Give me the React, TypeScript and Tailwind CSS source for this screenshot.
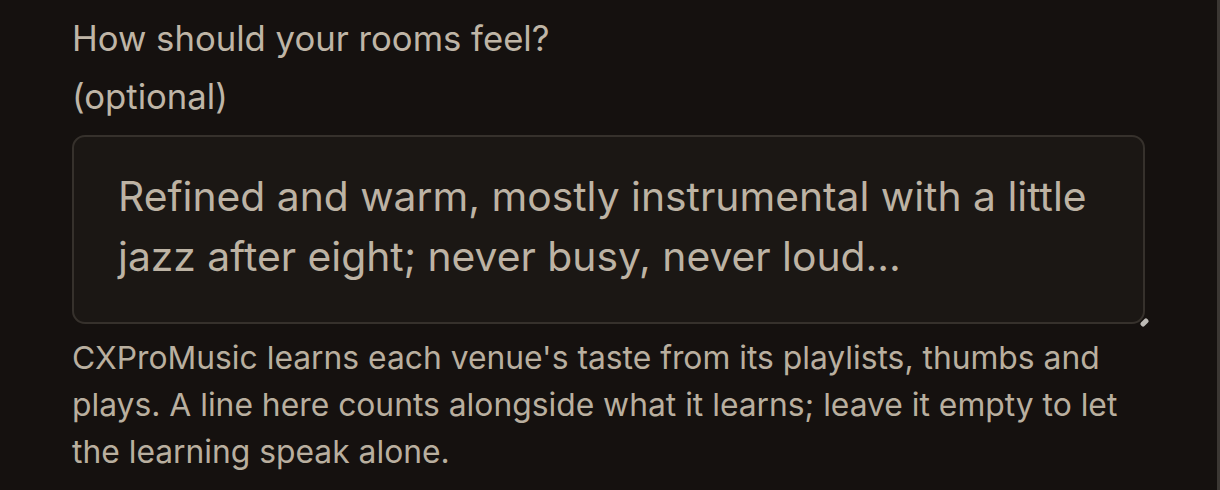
import { useState } from "react";

export default function App() {
  const [vibe, setVibe] = useState("");

  return (
    <div className="min-h-[490px] w-full bg-[#15110f] flex [font-family:Inter,'Noto_Sans',sans-serif]">
      <div className="flex-1 pl-[72px] pt-[9px]">
        <div className="w-[1073px] flex flex-col">
          <label htmlFor="vibe" className="text-[34.7px] leading-[58px] text-[#bfb5a6]">
            How should your rooms feel?
            <br />
            (optional)
          </label>

          <div className="relative mt-[10px]">
            <textarea
              id="vibe"
              value={vibe}
              onChange={(e) => setVibe(e.target.value)}
              placeholder="Refined and warm, mostly instrumental with a little jazz after eight; never busy, never loud…"
              className="block h-[189px] w-full resize-none rounded-[13px] border-2 border-[#36312c] bg-[#1b1714] px-[44px] py-[29px] text-[40.8px] leading-[60px] text-[#c6bcad] placeholder:text-[#bdb3a4] outline-none"
            />
            {/* resize grip */}
            <div className="pointer-events-none absolute right-[-4px] bottom-[-1px] h-[5px] w-[9px] -rotate-45 rounded-[2px] bg-[#bdbab6]" />
          </div>

          <p className="mt-[10px] text-[31.8px] leading-[47px] text-[#b9af9f]">
            CXProMusic learns each venue's taste from its playlists, thumbs and plays. A line here
            counts alongside what it learns; leave it empty to let the learning speak alone.
          </p>
        </div>
      </div>
      {/* scrollbar edge */}
      <div className="w-[3px] bg-[#3b3733]" />
    </div>
  );
}
